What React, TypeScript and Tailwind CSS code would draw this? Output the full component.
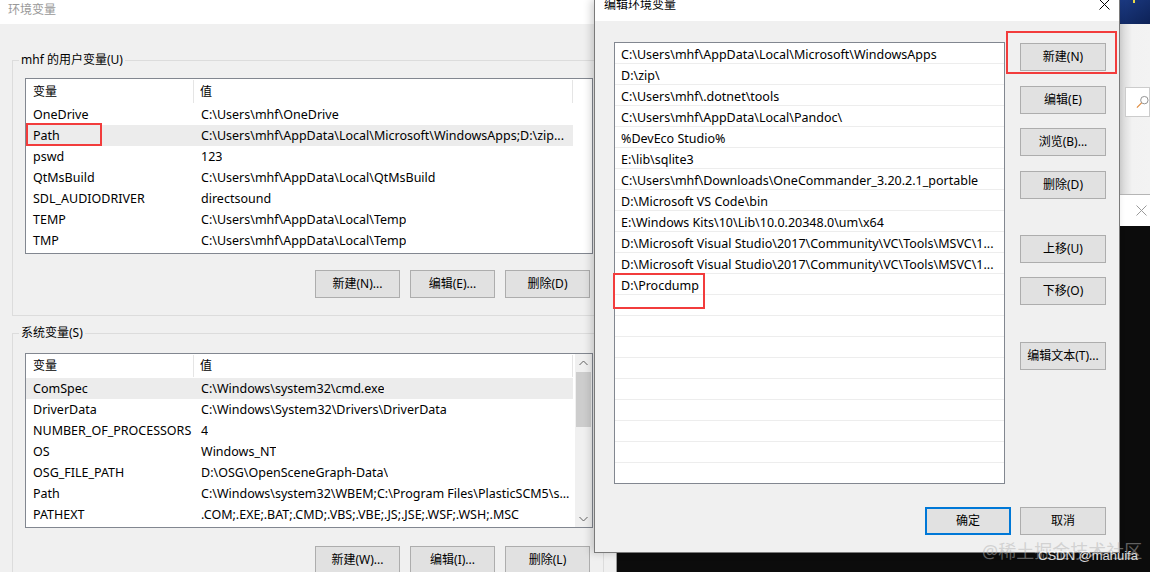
import React from "react";

const userVars: [string, string][] = [
  ["OneDrive", "C:\\Users\\mhf\\OneDrive"],
  ["Path", "C:\\Users\\mhf\\AppData\\Local\\Microsoft\\WindowsApps;D:\\zip..."],
  ["pswd", "123"],
  ["QtMsBuild", "C:\\Users\\mhf\\AppData\\Local\\QtMsBuild"],
  ["SDL_AUDIODRIVER", "directsound"],
  ["TEMP", "C:\\Users\\mhf\\AppData\\Local\\Temp"],
  ["TMP", "C:\\Users\\mhf\\AppData\\Local\\Temp"],
];

const sysVars: [string, string][] = [
  ["ComSpec", "C:\\Windows\\system32\\cmd.exe"],
  ["DriverData", "C:\\Windows\\System32\\Drivers\\DriverData"],
  ["NUMBER_OF_PROCESSORS", "4"],
  ["OS", "Windows_NT"],
  ["OSG_FILE_PATH", "D:\\OSG\\OpenSceneGraph-Data\\"],
  ["Path", "C:\\Windows\\system32\\WBEM;C:\\Program Files\\PlasticSCM5\\s..."],
  ["PATHEXT", ".COM;.EXE;.BAT;.CMD;.VBS;.VBE;.JS;.JSE;.WSF;.WSH;.MSC"],
];

const paths = [
  "C:\\Users\\mhf\\AppData\\Local\\Microsoft\\WindowsApps",
  "D:\\zip\\",
  "C:\\Users\\mhf\\.dotnet\\tools",
  "C:\\Users\\mhf\\AppData\\Local\\Pandoc\\",
  "%DevEco Studio%",
  "E:\\lib\\sqlite3",
  "C:\\Users\\mhf\\Downloads\\OneCommander_3.20.2.1_portable",
  "D:\\Microsoft VS Code\\bin",
  "E:\\Windows Kits\\10\\Lib\\10.0.20348.0\\um\\x64",
  "D:\\Microsoft Visual Studio\\2017\\Community\\VC\\Tools\\MSVC\\1...",
  "D:\\Microsoft Visual Studio\\2017\\Community\\VC\\Tools\\MSVC\\1...",
  "D:\\Procdump",
  "", "", "", "", "", "", "", "", "", "",
];

const WinButton = ({ label, className = "" }: { label: string; className?: string }) => (
  <div
    className={`h-[28px] flex items-center justify-center bg-[#e1e1e1] text-black whitespace-nowrap ${
      className || "border border-[#adadad]"
    }`}
  >
    {label}
  </div>
);

const Chevron = ({ up }: { up?: boolean }) => (
  <svg width="9" height="6" viewBox="0 0 9 6" className={up ? "" : "rotate-180"}>
    <path d="M0.5 5 L4.5 1 L8.5 5" fill="none" stroke="#606060" strokeWidth="1" />
  </svg>
);

const Scrollbar = () => (
  <div className="w-[17px] bg-[#f0f0f0] flex flex-col items-center">
    <div className="h-[17px] flex items-center justify-center">
      <Chevron up />
    </div>
    <div className="w-[15px] h-[55px] mt-[1px] bg-[#cdcdcd]" />
    <div className="flex-1" />
    <div className="h-[17px] flex items-center justify-center">
      <Chevron />
    </div>
  </div>
);

const VarList = ({
  rows,
  selected,
  height,
  header,
  scroll,
}: {
  rows: [string, string][];
  selected: number;
  height: string;
  header: string;
  scroll?: boolean;
}) => (
  <div className={`w-[568px] ${height} border border-[#828790] bg-white flex overflow-hidden`}>
    <div className="flex-1 flex flex-col">
      <div className={`${header} flex`}>
        <div className="w-[168px] pl-[7px] flex items-center border-r border-[#e5e5e5] my-[1px]">变量</div>
        <div className="w-[379px] pl-[6px] flex items-center border-r border-[#e5e5e5] my-[1px]">值</div>
      </div>
      {rows.map(([name, value], i) => (
        <div
          key={name + i}
          className={`h-[21px] w-[547px] flex items-start pt-[3px] leading-[16px] whitespace-nowrap text-[12.5px] ${
            i === selected ? "bg-[#ececec]" : ""
          }`}
        >
          <div className="w-[168px] pl-[7px] shrink-0">{name}</div>
          <div className="pl-[7px] overflow-hidden">{value}</div>
        </div>
      ))}
    </div>
    {scroll && <Scrollbar />}
  </div>
);

const Group = ({ title, children, className = "" }: { title: string; children: React.ReactNode; className?: string }) => (
  <div className={`relative border border-[#dcdcdc] pl-[12px] ${className}`}>
    <span className="absolute -top-[9px] left-[6px] px-[2px] bg-[#f0f0f0] leading-[16px]">{title}</span>
    {children}
  </div>
);

const Close = ({ color = "#000" }: { color?: string }) => (
  <svg width="11" height="11" viewBox="0 0 11 11">
    <path d="M0.5 0.5 L10.5 10.5 M10.5 0.5 L0.5 10.5" stroke={color} strokeWidth="1" />
  </svg>
);

export default function App() {
  return (
    <div className="relative w-[1150px] h-[572px] overflow-hidden bg-[#0c0c0c] text-[12px] text-black font-['Noto_Sans','Noto_Sans_CJK_SC',sans-serif]">
      {/* 环境变量 window */}
      <div className="absolute left-0 top-0 w-[617px] h-[600px] bg-[#f0f0f0] border-r border-[#9a9a9a]">
        <div className="h-[24px] bg-white pl-[8px] pt-[2px] leading-[16px] text-[#999]">环境变量</div>
        <div className="px-[12px]">
          <Group title="mhf 的用户变量(U)" className="mt-[36px] pt-[17px] pb-[17px]">
            <VarList rows={userVars} selected={1} height="h-[176px]" header="h-[25px]" />
            <div className="w-[568px] pr-[3px] mt-[16px] flex justify-end gap-[10px]">
              <WinButton label="新建(N)..." className="w-[85px] border border-[#adadad]" />
              <WinButton label="编辑(E)..." className="w-[85px] border border-[#adadad]" />
              <WinButton label="删除(D)" className="w-[85px] border border-[#adadad]" />
            </div>
          </Group>
          <Group title="系统变量(S)" className="mt-[17px] pt-[19px] pb-[17px]">
            <VarList rows={sysVars} selected={0} height="h-[175px]" header="h-[24px]" scroll />
            <div className="w-[568px] pr-[3px] mt-[18px] flex justify-end gap-[10px]">
              <WinButton label="新建(W)..." className="w-[85px] border border-[#adadad]" />
              <WinButton label="编辑(I)..." className="w-[85px] border border-[#adadad]" />
              <WinButton label="删除(L)" className="w-[85px] border border-[#adadad]" />
            </div>
          </Group>
        </div>
      </div>

      {/* windows behind the dialog on the right */}
      <div className="absolute left-[1114px] top-0 w-[36px] h-[24px] rounded-bl-[8px] bg-linear-to-br from-[#1d3c86] to-[#0d2257]">
        <div className="ml-[19px] w-[2px] h-[3px] bg-[#e8d84a]" />
      </div>
      <div className="absolute left-[1120px] top-[24px] w-[30px] h-[171px] bg-linear-to-r from-[#d4d4d4] via-[#f2f2f2] via-40% to-[#f3f3f3] pt-[63px] pl-[5px]">
        <div className="h-[30px] border border-[#cccccc] bg-white flex items-center pl-[10px]">
          <svg width="14" height="14" viewBox="0 0 14 14">
            <circle cx="9" cy="5" r="4" fill="none" stroke="#8a8a8a" strokeWidth="1" />
            <path d="M6 8 L1 13" stroke="#e08a3c" strokeWidth="1.3" />
          </svg>
        </div>
      </div>
      <div className="absolute left-[617px] top-[194px] w-[533px] h-[400px] border-t border-[#b5b5b5] bg-[#0c0c0c]">
        <div className="h-[31px] bg-white flex items-center justify-end pr-[3px]">
          <Close color="#9a9a9a" />
        </div>
      </div>

      {/* 编辑环境变量 dialog */}
      <div className="absolute left-[594px] top-0 w-[526px] h-[553px] border border-t-0 border-[#7a7a7a] bg-[#f0f0f0] shadow-[-3px_0_8px_rgba(0,0,0,0.18)] flex flex-col">
        <div className="h-[21px] bg-white flex items-start pl-[9px] pr-[9px]">
          <span className="-mt-[3px] leading-[16px]">编辑环境变量</span>
          <span className="ml-auto -mt-[1px]">
            <Close />
          </span>
        </div>
        <div className="flex pl-[19px] pt-[21px]">
          <div className="w-[391px] h-[442px] border border-[#828790] bg-white overflow-hidden">
            {paths.map((p, i) => (
              <div
                key={i}
                className="h-[21px] border-b border-[#ededed] pl-[6px] pt-[4px] leading-[16px] text-[12.5px] whitespace-nowrap"
              >
                {p}
              </div>
            ))}
          </div>
          <div className="ml-[15px] pt-[1px] w-[86px] flex flex-col">
            <WinButton label="新建(N)" />
            <WinButton label="编辑(E)" className="mt-[15px] border border-[#adadad]" />
            <WinButton label="浏览(B)..." className="mt-[14px] border border-[#adadad]" />
            <WinButton label="删除(D)" className="mt-[15px] border border-[#adadad]" />
            <WinButton label="上移(U)" className="mt-[36px] border border-[#adadad]" />
            <WinButton label="下移(O)" className="mt-[14px] border border-[#adadad]" />
            <WinButton label="编辑文本(T)..." className="mt-[37px] border border-[#adadad]" />
          </div>
        </div>
        <div className="flex justify-end gap-[9px] pr-[13px] mt-[23px]">
          <WinButton label="确定" className="w-[86px] border-2 border-[#0078d7]" />
          <WinButton label="取消" className="w-[86px] border border-[#adadad]" />
        </div>
      </div>

      {/* annotation boxes */}
      <div className="absolute left-[26px] top-[123px] w-[76px] h-[23px] border-2 border-[#f23c3c]" />
      <div className="absolute left-[613px] top-[273px] w-[92px] h-[36px] border-2 border-[#f23c3c]" />
      <div className="absolute left-[1006px] top-[31px] w-[111px] h-[43px] border-2 border-[#f23c3c]" />

      {/* watermarks */}
      <div className="absolute left-[982px] top-[539px] text-[18px] leading-[24px] text-[#b4b4b4]/50 whitespace-nowrap">
        @稀土掘金技术社区
      </div>
      <div className="absolute left-[1038px] top-[548px] text-[13px] leading-[16px] text-white/85 whitespace-nowrap font-['Liberation_Sans',sans-serif]">
        CSDN @mahuifa
      </div>
    </div>
  );
}
